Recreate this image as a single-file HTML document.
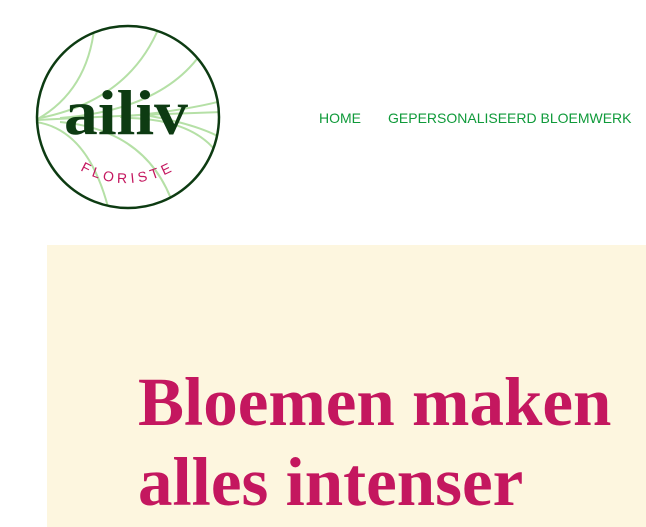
<!DOCTYPE html>
<html><head><style>
body{margin:0;width:646px;height:527px;overflow:hidden;background:#fff;position:relative;font-family:"Liberation Sans",sans-serif}
.nav{position:absolute;top:110px;font-size:14px;color:#0f9a3a}
.box{position:absolute;left:47px;top:245px;width:599px;height:282px;background:#fdf6df}
h1{position:absolute;left:138px;top:362px;margin:0;font-family:"Liberation Serif",serif;font-weight:bold;font-size:69px;line-height:80px;color:#c4175f;white-space:nowrap}
</style></head><body>
<svg style="position:absolute;left:0;top:0" width="260" height="230" viewBox="0 0 260 230">
<defs><clipPath id="c"><circle cx="128" cy="117" r="91"/></clipPath>
<path id="arc" d="M80 170 Q128 198 182 166"/></defs>
<g clip-path="url(#c)" fill="none" stroke="#b5e0a6" stroke-width="2">
<path d="M36 120 Q130 115 222 112"/>
<path d="M36 120 Q90 90 95 20"/>
<path d="M40 118 Q130 100 160 25"/>
<path d="M60 118 Q160 110 200 55"/>
<path d="M120 117 Q190 110 225 100"/>
<path d="M36 122 Q90 130 110 215"/>
<path d="M60 122 Q150 130 175 210"/>
<path d="M130 118 Q190 120 215 150"/>
<path d="M150 116 Q200 125 225 140"/>
</g>
<circle cx="128" cy="117" r="91" fill="none" stroke="#0d3b12" stroke-width="2.5"/>
<text x="64" y="134" font-family="Liberation Serif,serif" font-weight="bold" font-size="64" fill="#0d3b12" textLength="124" lengthAdjust="spacingAndGlyphs">ailiv</text>
<text font-family="Liberation Sans,sans-serif" font-size="14" letter-spacing="4" fill="#c4175f"><textPath href="#arc">FLORISTE</textPath></text>
</svg>
<div class="nav" style="left:319px">HOME</div>
<div class="nav" style="left:388px">GEPERSONALISEERD BLOEMWERK</div>
<div class="box"></div>
<h1>Bloemen maken<br>alles intenser</h1>
</body></html>
